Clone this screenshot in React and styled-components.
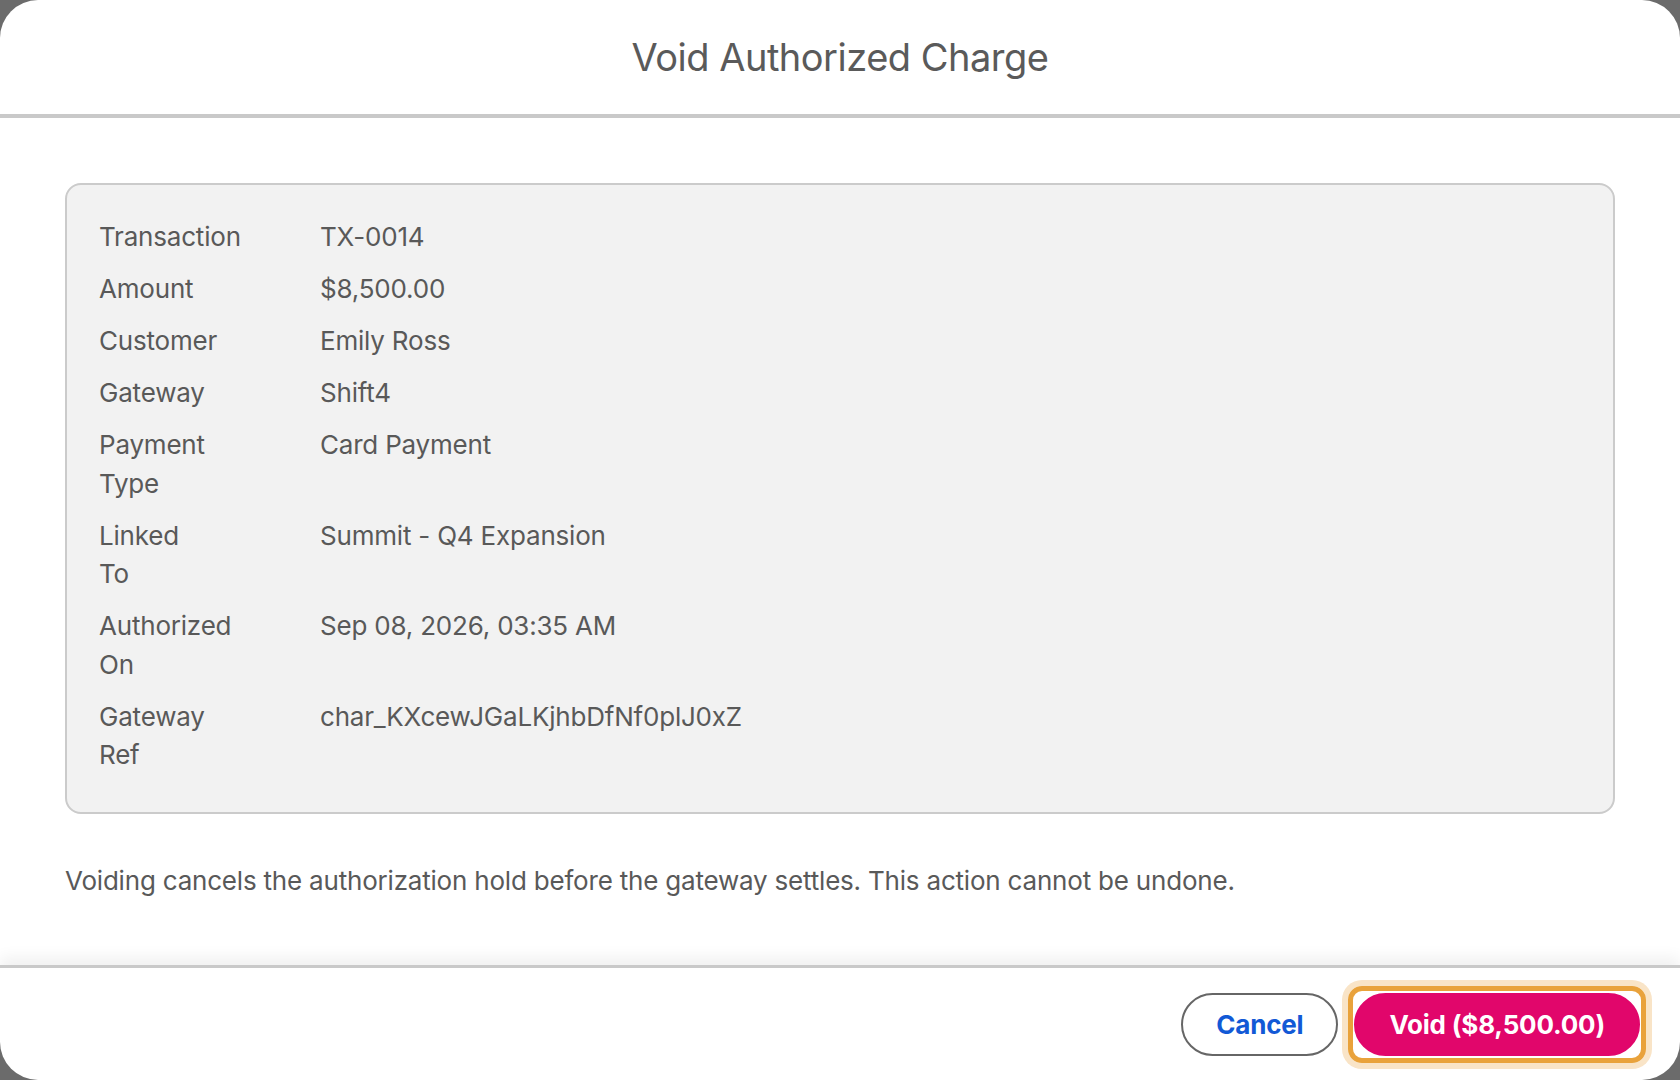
import React from "react";
import styled, { createGlobalStyle } from "styled-components";

const Global = createGlobalStyle`
  html, body { margin: 0; padding: 0; }
  body {
    background: #6b6b6b;
    font-family: Inter, "Noto Sans", "Liberation Sans", sans-serif;
    -webkit-font-smoothing: antialiased;
  }
  * { box-sizing: border-box; }
`;

const Dialog = styled.div`
  width: 100vw;
  height: 100vh;
  background: #ffffff;
  border-radius: 38px;
  overflow: hidden;
  display: flex;
  flex-direction: column;
`;

const Header = styled.header`
  height: 118px;
  flex: none;
  display: flex;
  align-items: center;
  justify-content: center;
  border-bottom: 4px solid #c9c9c9;
`;

const Title = styled.h1`
  margin: 0;
  font-size: 38px;
  font-weight: 400;
  color: #5a5a5a;
  letter-spacing: -0.5px;
`;

const Body = styled.main`
  flex: 1;
  padding: 65px 65px 0;
`;

const DetailsCard = styled.dl`
  margin: 0;
  background: #f2f2f2;
  border: 2px solid #cbcbcb;
  border-radius: 16px;
  padding: 33px 31px 37px 32px;
  display: grid;
  grid-template-columns: 221px 1fr;
  row-gap: 13.5px;
`;

const Label = styled.dt`
  width: min-content;
  font-size: 26px;
  line-height: 38.5px;
  letter-spacing: -0.2px;
  color: #595959;
`;

const Value = styled.dd`
  margin: 0;
  font-size: 26px;
  line-height: 38.5px;
  letter-spacing: -0.2px;
  color: #595959;
`;

const Note = styled.p`
  margin: 48px 0 0;
  font-size: 26px;
  line-height: 38.5px;
  letter-spacing: -0.2px;
  color: #595959;
`;

const Footer = styled.footer`
  flex: none;
  border-top: 3px solid #c9c9c9;
  box-shadow: 0 -8px 14px rgba(0, 0, 0, 0.06);
  padding: 25px 40px 24px;
  display: flex;
  justify-content: flex-end;
  align-items: center;
  gap: 16px;
`;

const Button = styled.button`
  position: relative;
  height: 63px;
  padding: 0 33px;
  border-radius: 999px;
  font-family: inherit;
  font-size: 26px;
  font-weight: 700;
  letter-spacing: -0.2px;
  cursor: pointer;
  border: 2px solid ${(p) => (p.$primary ? "#e1066b" : "#666666")};
  background: ${(p) => (p.$primary ? "#e1066b" : "#ffffff")};
  color: ${(p) => (p.$primary ? "#ffffff" : "#1259d6")};

  ${(p) =>
    p.$focused &&
    `
    &::after {
      content: "";
      position: absolute;
      inset: -9px -8px -9px -8px;
      border: 5px solid #e9a23b;
      border-radius: 14px;
      box-shadow: 0 0 0 6px #f9e4c7;
      pointer-events: none;
    }
  `}
`;

const details = [
  ["Transaction", "TX-0014"],
  ["Amount", "$8,500.00"],
  ["Customer", "Emily Ross"],
  ["Gateway", "Shift4"],
  ["Payment Type", "Card Payment"],
  ["Linked To", "Summit - Q4 Expansion"],
  ["Authorized On", "Sep 08, 2026, 03:35 AM"],
  ["Gateway Ref", "char_KXcewJGaLKjhbDfNf0plJ0xZ"],
];

export default function App() {
  return (
    <>
      <Global />
      <Dialog>
        <Header>
          <Title>Void Authorized Charge</Title>
        </Header>
        <Body>
          <DetailsCard>
            {details.map(([k, v]) => (
              <React.Fragment key={k}>
                <Label>{k}</Label>
                <Value>{v}</Value>
              </React.Fragment>
            ))}
          </DetailsCard>
          <Note>
            Voiding cancels the authorization hold before the gateway settles.
            This action cannot be undone.
          </Note>
        </Body>
        <Footer>
          <Button>Cancel</Button>
          <Button $primary $focused>
            Void ($8,500.00)
          </Button>
        </Footer>
      </Dialog>
    </>
  );
}
